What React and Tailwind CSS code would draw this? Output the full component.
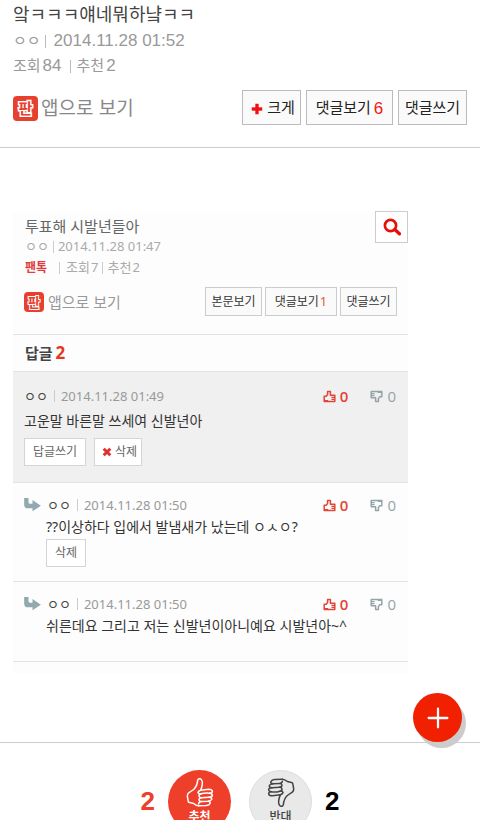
import { Plus } from 'lucide-react';
import clsx from 'clsx';

const replies = [
  { id: 1, author: 'ㅇㅇ', date: '2014.11.28 01:49', text: '고운말 바른말 쓰세여 신발년아', actions: ['reply', 'delete'] },
  { id: 2, author: 'ㅇㅇ', date: '2014.11.28 01:50', text: '??이상하다 입에서 발냄새가 났는데 ㅇㅅㅇ?', nested: true, actions: ['plainDelete'] },
  { id: 3, author: 'ㅇㅇ', date: '2014.11.28 01:50', text: '쉬른데요 그리고 저는 신발년이아니예요 시발년아~^', nested: true, actions: [] },
];

function AppLogo({ small }) {
  return (
    <span
      className={clsx(
        'flex items-center justify-center bg-[#e8402f] text-[#e8402f] font-bold [paint-order:stroke_fill]',
        small
          ? 'w-5 h-5 rounded-sm text-[13px] leading-5 [-webkit-text-stroke:2px_white]'
          : 'w-[25px] h-[25px] rounded text-[15px] leading-6 [-webkit-text-stroke:3px_white]'
      )}
    >
      판
    </span>
  );
}

function SearchIcon() {
  return (
    <svg viewBox="0 0 18 18" className="w-[18px] h-[18px]" fill="none" stroke="#e60f0a">
      <circle cx="7.5" cy="7.5" r="5.6" strokeWidth="2.7" />
      <path d="M11.8 11.6 16.4 15.8" strokeWidth="3.4" strokeLinecap="round" />
    </svg>
  );
}

function ReplyArrow() {
  return (
    <svg viewBox="0 0 50 42" className="w-[17px] h-[14px]" fill="#93a9b0">
      <path d="M0 0h13v13q0 4 4 4h8V6l25 17-25 17V31H12Q0 31 0 20z" />
    </svg>
  );
}

function SmallThumb({ down }) {
  return (
    <svg
      viewBox="0 0 13 13"
      className={clsx('w-[13px] h-[13px]', down && 'rotate-180')}
      fill="none"
      stroke="currentColor"
      strokeWidth="1.5"
      strokeLinejoin="round"
    >
      <path d="M1.2 6.2h2L4.6 4.6V1.4h2.8v3.8h4.4v6.2H1.2z" />
      <path d="M8.4 7.3h3.4M8.4 9.3h3.4M1.2 10.6h4" strokeWidth="1.2" />
    </svg>
  );
}

function HandIcon({ down }) {
  return (
    <svg
      viewBox="198 288 84 92"
      className={clsx('w-7 h-[31px]', down && 'rotate-180')}
      fill="none"
      stroke="currentColor"
      strokeWidth="4.5"
      strokeLinecap="round"
      strokeLinejoin="round"
    >
      <path d="M236 374Q229 374 221 367L206 363Q204 361 204 356L202 346Q201 340 206 335L221 325Q232 314 233 297Q235 291 241 293Q248 296 247 309Q246 318 242 327L266 324Q276 324 277 330Q277 336 269 336" />
      <path d="M243 338Q256 334 269 336Q278 338 277 343Q276 348 267 348L244 350" />
      <path d="M267 348Q277 350 275 355Q273 359 264 360L243 361" />
      <path d="M264 360Q273 362 270 367Q268 372 259 373L236 374" />
      <path d="M242 327Q235 329 234 334Q235 339 243 338Q236 341 237 345Q238 350 244 350Q236 352 237 356Q238 361 243 361Q235 364 236 368" />
    </svg>
  );
}

function PostHeader() {
  const button = 'h-[35px] pt-0.5 border border-[#bbbbbe] bg-[#fafafa] text-[15px] text-[#222] flex items-center justify-center';
  return (
    <header className="px-[13px] pt-0.5 pb-[22px] border-b border-[#ccc]">
      <h1 className="text-[18px] leading-[26px] text-[#444]">앜ㅋㅋㅋ얘네뭐하냨ㅋㅋ</h1>
      <p className="flex items-center h-[26px] text-[15px] text-[#999]">
        ㅇㅇ
        <span className="w-px h-[13px] ml-1 mr-2 bg-[#bbb]" />
        <time className="text-[17px]">2014.11.28 01:52</time>
      </p>
      <p className="flex items-center h-6 text-[15px] text-[#999]">
        조회<span className="ml-0.5 text-[17px]">84</span>
        <span className="w-px h-[13px] ml-2 mr-1.5 bg-[#bbb]" />
        추천<span className="ml-0.5 text-[17px]">2</span>
      </p>
      <div className="flex items-center justify-between mt-3">
        <a href="#app" className="flex items-center gap-[3px] pt-0.5 text-[19px] leading-6 text-[#888]">
          <AppLogo />
          앱으로 보기
        </a>
        <div className="flex gap-[5px]">
          <button className={clsx(button, 'w-[59px] gap-px')}>
            <Plus className="w-[18px] h-[18px] text-[#f01010]" strokeWidth={4.5} strokeLinecap="butt" />
            크게
          </button>
          <button className={clsx(button, 'w-[87px] gap-[3px]')}>
            댓글보기<span className="text-[17px] text-[#f02010]">6</span>
          </button>
          <button className={clsx(button, 'w-[69px]')}>댓글쓰기</button>
        </div>
      </div>
    </header>
  );
}

function ReplyActions({ actions }) {
  const button = 'h-7 border border-[#d4d4d4] bg-white text-[12px] text-[#666] flex items-center justify-center';
  return (
    <div className="flex gap-2">
      {actions.includes('reply') && <button className={clsx(button, 'w-[62px]')}>답글쓰기</button>}
      {actions.includes('delete') && (
        <button className={clsx(button, 'w-12')}>
          <Plus className="w-4 h-4 rotate-45 text-[#e03030]" strokeWidth={4.5} strokeLinecap="butt" />
          삭제
        </button>
      )}
      {actions.includes('plainDelete') && <button className={clsx(button, 'w-10')}>삭제</button>}
    </div>
  );
}

function Reply({ reply }) {
  return (
    <li
      className={clsx(
        'pl-[11px] pr-3 border-b border-[#e2e2e2]',
        reply.nested ? 'pt-3' : 'pt-[14px] pb-4 bg-[#f0f0f0]',
        reply.nested && (reply.actions.length ? 'pb-[14px]' : 'pb-[23px]')
      )}
    >
      <div className="flex items-center h-5 text-[13px] leading-5">
        {reply.nested && <span className="w-[23px]"><ReplyArrow /></span>}
        <span className="text-[#444]">{reply.author}</span>
        <span className="w-px h-3 mx-[6px] bg-[#ccc]" />
        <time className="text-[#999]">{reply.date}</time>
        <div className="flex items-center gap-[22px] ml-auto text-[15px] leading-5 font-['Open_Sans',sans-serif]">
          <button className="flex items-center gap-1 text-[#e24438] font-semibold"><SmallThumb />0</button>
          <button className="flex items-center gap-1 text-[#93a4a9]"><SmallThumb down />0</button>
        </div>
      </div>
      <div className={clsx(reply.nested ? 'pl-[22px]' : 'pt-[5px]')}>
        <p className={clsx('text-[14px] text-[#333]', reply.nested ? 'leading-6' : 'leading-5 mb-[7px]')}>{reply.text}</p>
        <ReplyActions actions={reply.actions} />
      </div>
    </li>
  );
}

function Capture() {
  const button = 'h-[29px] border border-[#ccc] bg-[#fafafa] text-[12px] text-[#333] flex items-center justify-center';
  return (
    <article className="max-w-[395px] pb-3 bg-[#fdfdfd] font-['Noto_Sans','Noto_Sans_CJK_KR',sans-serif]">
      <div className="flex items-start justify-between pl-3">
        <div className="pt-[5px]">
          <h2 className="text-[15px] leading-5 text-[#666]">투표해 시발년들아</h2>
          <p className="flex items-center h-[22px] text-[13px] text-[#aaa]">
            ㅇㅇ
            <span className="w-px h-3 mx-1 bg-[#ccc]" />
            <time>2014.11.28 01:47</time>
          </p>
          <p className="flex items-center h-5 text-[13px] text-[#aaa]">
            <b className="text-[12px] text-[#e23b3b]">팬톡</b>
            <span className="w-px h-3 ml-3 mr-[6px] bg-[#ccc]" />
            조회<span className="ml-px">7</span>
            <span className="w-px h-3 mx-1 bg-[#ccc]" />
            추천<span className="ml-px">2</span>
          </p>
        </div>
        <button aria-label="검색" className="flex items-center justify-center w-[33px] h-8 border border-[#ccc] bg-white">
          <SearchIcon />
        </button>
      </div>
      <div className="flex items-center justify-between px-[11px] mt-[9px] mb-[18px]">
        <a href="#app" className="flex items-center gap-1 text-[15px] leading-5 text-[#999]">
          <AppLogo small />
          앱으로 보기
        </a>
        <div className="flex gap-[3px]">
          <button className={clsx(button, 'w-[57px]')}>본문보기</button>
          <button className={clsx(button, 'w-[72px] gap-px')}>
            댓글보기<span className="text-[13px] text-[#e05a40]">1</span>
          </button>
          <button className={clsx(button, 'w-[57px]')}>댓글쓰기</button>
        </div>
      </div>
      <h3 className="flex items-center gap-[3px] h-[38px] pl-3 border-y border-[#e2e2e2] text-[15px] font-bold text-[#444]">
        답글<span className="text-[17px] text-[#e6381f]">2</span>
      </h3>
      <ul>
        {replies.map((reply) => (
          <Reply key={reply.id} reply={reply} />
        ))}
      </ul>
    </article>
  );
}

function Votes() {
  const circle = 'flex flex-col items-center w-[63px] h-[63px] rounded-full text-[12px] leading-[18px]';
  return (
    <footer className="flex justify-center pt-[27px] text-[26px] leading-[63px] font-bold">
      <span className="mr-[13px] text-[#ee3f2a]">2</span>
      <button className={clsx(circle, 'mr-[18px] pt-[7px] bg-[#ee3f2a] text-white font-bold')}>
        <HandIcon />
        추천
      </button>
      <button className={clsx(circle, 'pt-1.5 bg-[#e9e9e9] border border-[#ddd] text-[#444] font-medium')}>
        <HandIcon down />
        반대
      </button>
      <span className="ml-[13px] text-black">2</span>
    </footer>
  );
}

export default function App() {
  return (
    <div className="min-h-screen bg-white font-['Liberation_Sans','Noto_Sans_CJK_KR',sans-serif]">
      <PostHeader />
      <main className="px-[13px] pt-[63px] pb-[68px] border-b border-[#ccc]">
        <Capture />
      </main>
      <Votes />
      <button
        aria-label="메뉴 열기"
        className="fixed right-[18px] bottom-[78px] flex items-center justify-center w-[49px] h-[49px] rounded-full bg-[#f02000] text-white shadow-[4px_6px_0_#ccc]"
      >
        <Plus className="w-8 h-8" strokeWidth={1.7} />
      </button>
    </div>
  );
}
